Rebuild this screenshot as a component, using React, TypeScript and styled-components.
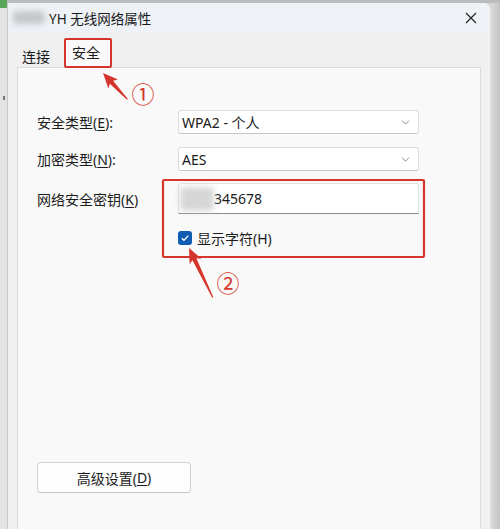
import React from "react";
import styled, { createGlobalStyle } from "styled-components";
import { ChevronDown } from "lucide-react";

const GlobalStyle = createGlobalStyle`
  html, body {
    margin: 0;
    padding: 0;
    background: #d4d4d4;
  }
  body {
    font-family: "Noto Sans", "Noto Sans CJK SC", sans-serif;
    color: #1b1b1b;
  }
`;

const RED = "#d5362c";

const Page = styled.div`
  position: relative;
  width: 500px;
  height: 529px;
  overflow: hidden;
  display: flex;
  flex-direction: column;
`;

const TopStrip = styled.div`
  height: 3px;
  background: #b9bcbf;
  flex-shrink: 0;
`;

const Desk = styled.div`
  flex: 1;
  display: flex;
  min-height: 0;
`;

const LeftStrip = styled.div`
  width: 7px;
  background: #e4e4e4;
  border-right: 1px solid #c9c9c9;
  display: flex;
  flex-direction: column;
  .green {
    height: 8px;
    background: #5aa55a;
    margin-top: -3px;
  }
  .mark {
    height: 4px;
    width: 2px;
    background: #777;
    margin-left: 3px;
    margin-top: 88px;
  }
`;

const Window = styled.div`
  width: 482px;
  display: flex;
  flex-direction: column;
  background: #f0f0f0;
  border-top-right-radius: 7px;
  border-right: 1px solid #e2e2e2;
  overflow: hidden;
`;

const RightStrip = styled.div`
  flex: 1;
  background: linear-gradient(90deg, #d9d9d9, #c4c4c4);
`;

const TitleBar = styled.div`
  height: 29px;
  background: #eef2f6;
  display: flex;
  align-items: center;
  padding-left: 5px;
  padding-right: 12px;
`;

const Blurred = styled.div<{ $w: number; $h: number; $tone: string }>`
  width: ${(p) => p.$w}px;
  height: ${(p) => p.$h}px;
  background: ${(p) => p.$tone};
  filter: blur(3px);
  border-radius: 4px;
  flex-shrink: 0;
`;

const Title = styled.div`
  font-size: 13.5px;
  margin-left: 4px;
  color: #1a1a1a;
`;

const CloseBtn = styled.div`
  margin-left: auto;
  width: 14px;
  height: 14px;
  display: flex;
  align-items: center;
  justify-content: center;
`;

const TabRow = styled.div`
  height: 35px;
  display: flex;
  align-items: flex-end;
  padding-left: 9px;
`;

const Tab = styled.div<{ $active?: boolean }>`
  box-sizing: border-box;
  font-size: 14px;
  display: flex;
  align-items: center;
  height: ${(p) => (p.$active ? "30px" : "24px")};
  padding: ${(p) => (p.$active ? "0 10px 2px 6px" : "2px 14px 0 5px")};
  background: ${(p) => (p.$active ? "#f9f9f9" : "transparent")};
  border: ${(p) => (p.$active ? `2px solid ${RED}` : "none")};
  border-radius: 2px;
  margin-bottom: ${(p) => (p.$active ? "-1px" : "0")};
  position: relative;
  z-index: 1;
`;

const Panel = styled.div`
  flex: 1;
  margin: 0 9px 0 9px;
  background: #f9f9f9;
  border: 1px solid #dadada;
  border-bottom: none;
  padding: 42px 0 0 19px;
  display: flex;
  flex-direction: column;
`;

const FieldRow = styled.div<{ $h: number; $mb: number }>`
  display: grid;
  grid-template-columns: 141px 241px;
  align-items: center;
  height: ${(p) => p.$h}px;
  margin-bottom: ${(p) => p.$mb}px;
`;

const Label = styled.div`
  font-size: 14px;
  color: #1b1b1b;
  u {
    text-decoration: underline;
    text-underline-offset: 2px;
  }
`;

const Select = styled.div`
  box-sizing: border-box;
  height: 24px;
  background: #ffffff;
  border: 1px solid #dcdcdc;
  border-bottom-color: #c6c6c6;
  border-radius: 3px;
  display: flex;
  align-items: center;
  padding: 0 6px 0 3px;
  font-size: 14px;
  color: #1b1b1b;
  span {
    flex: 1;
  }
`;

const KeyInput = styled.div`
  box-sizing: border-box;
  height: 31px;
  background: #ffffff;
  border: 1px solid #e1e1e1;
  border-bottom: 1.5px solid #8a8a8a;
  border-radius: 3px 3px 0 0;
  display: flex;
  align-items: center;
  font-size: 14px;
  color: #1b1b1b;
  padding-left: 1px;
`;

const CheckRow = styled.div`
  display: flex;
  align-items: center;
  margin-left: 141px;
  margin-top: 17px;
  height: 14px;
  gap: 5px;
  font-size: 14px;
`;

const Checkbox = styled.div`
  width: 14px;
  height: 14px;
  border-radius: 3px;
  background: #0f5cb3;
  display: flex;
  align-items: center;
  justify-content: center;
`;

const Button = styled.div`
  box-sizing: border-box;
  margin-top: 217px;
  width: 154px;
  height: 31px;
  background: #fdfdfd;
  border: 1px solid #d3d3d3;
  border-bottom-color: #c4c4c4;
  border-radius: 4px;
  display: flex;
  align-items: center;
  justify-content: center;
  font-size: 14px;
  u {
    text-decoration: underline;
    text-underline-offset: 2px;
  }
`;

const Overlay = styled.svg`
  position: absolute;
  left: 0;
  top: 0;
  pointer-events: none;
`;

const Arrow: React.FC<{ x: number; y: number; angle: number; len: number }> = ({ x, y, angle, len }) => (
  <path
    transform={`translate(${x},${y}) rotate(${angle})`}
    d={`M0,0 L6.5,15 L2.2,12.5 L0.6,${len} L-0.6,${len} L-2.2,12.5 L-6.5,15 Z`}
    fill={RED}
  />
);

export default function App() {
  return (
    <>
      <GlobalStyle />
      <Page>
        <TopStrip />
        <Desk>
          <LeftStrip>
            <div className="green" />
            <div className="mark" />
          </LeftStrip>
          <Window>
            <TitleBar>
              <Blurred $w={32} $h={13} $tone="#c4c6c9" />
              <Title>YH 无线网络属性</Title>
              <CloseBtn>
                <svg width="12" height="12" viewBox="0 0 12 12">
                  <path d="M1 1 L11 11 M11 1 L1 11" stroke="#202020" strokeWidth="1.1" />
                </svg>
              </CloseBtn>
            </TitleBar>
            <TabRow>
              <Tab>连接</Tab>
              <Tab $active>安全</Tab>
            </TabRow>
            <Panel>
              <FieldRow $h={24} $mb={13}>
                <Label>
                  安全类型(<u>E</u>):
                </Label>
                <Select>
                  <span>WPA2 - 个人</span>
                  <ChevronDown size={13} strokeWidth={1.4} color="#666" />
                </Select>
              </FieldRow>
              <FieldRow $h={24} $mb={12}>
                <Label>
                  加密类型(<u>N</u>):
                </Label>
                <Select>
                  <span>AES</span>
                  <ChevronDown size={13} strokeWidth={1.4} color="#666" />
                </Select>
              </FieldRow>
              <FieldRow $h={31} $mb={0}>
                <Label>
                  网络安全密钥(<u>K</u>)
                </Label>
                <KeyInput>
                  <Blurred $w={34} $h={24} $tone="#d6d6d6" />
                  <span>345678</span>
                </KeyInput>
              </FieldRow>
              <CheckRow>
                <Checkbox>
                  <svg width="10" height="10" viewBox="0 0 10 10">
                    <path d="M1.8 5.2 L4 7.3 L8.3 2.6" stroke="#fff" strokeWidth="1.3" fill="none" />
                  </svg>
                </Checkbox>
                <span>显示字符(H)</span>
              </CheckRow>
              <Button>
                高级设置(<u>D</u>)
              </Button>
            </Panel>
          </Window>
          <RightStrip />
        </Desk>
        <Overlay width="500" height="529" viewBox="0 0 500 529">
          <rect x="163" y="180" width="261" height="77" fill="none" stroke={RED} strokeWidth="2.2" rx="1" />
          <Arrow x={103} y={73} angle={-42.7} len={36} />
          <Arrow x={189} y={248} angle={-25.6} len={55} />
          <text
            x="143"
            y="93"
            fill={RED}
            fontSize="23"
            textAnchor="middle"
            dominantBaseline="central"
            fontFamily="'Noto Sans CJK SC', sans-serif"
          >
            ①
          </text>
          <text
            x="228"
            y="282"
            fill={RED}
            fontSize="23"
            textAnchor="middle"
            dominantBaseline="central"
            fontFamily="'Noto Sans CJK SC', sans-serif"
          >
            ②
          </text>
        </Overlay>
      </Page>
    </>
  );
}
